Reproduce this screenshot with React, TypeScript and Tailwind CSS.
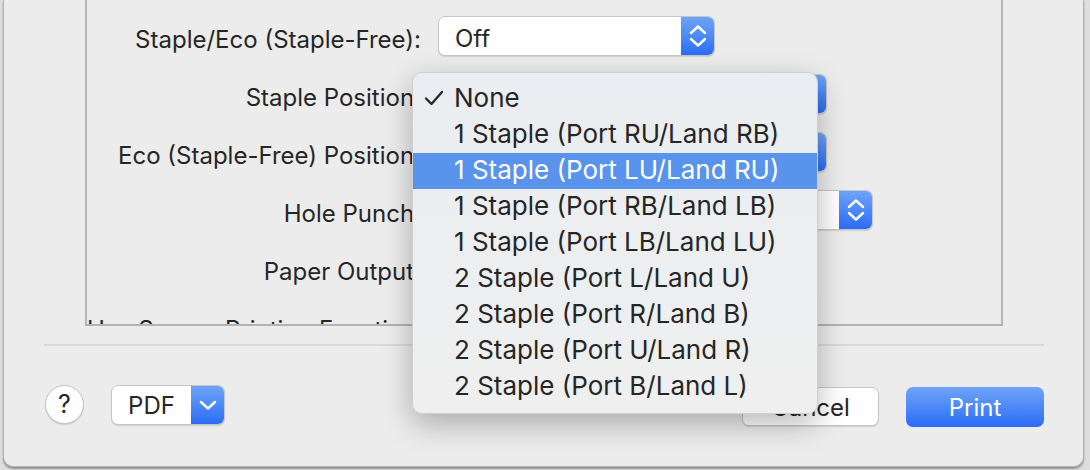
import React from "react";

const rows = [
  { label: "Staple/Eco (Staple-Free):", value: "Off", w: "w-[277px]" },
  { label: "Staple Position:", value: "None", w: "w-[389px]" },
  { label: "Eco (Staple-Free) Position:", value: "None", w: "w-[389px]" },
  { label: "Hole Punch:", value: "Off", w: "w-[435px]" },
  { label: "Paper Output:", value: "Auto", w: "w-[360px]" },
  { label: "Use Secure Printing Function:", value: "Off", w: "w-[277px]" },
];

const items = [
  "None",
  "1 Staple (Port RU/Land RB)",
  "1 Staple (Port LU/Land RU)",
  "1 Staple (Port RB/Land LB)",
  "1 Staple (Port LB/Land LU)",
  "2 Staple (Port L/Land U)",
  "2 Staple (Port R/Land B)",
  "2 Staple (Port U/Land R)",
  "2 Staple (Port B/Land L)",
];

function Stepper() {
  return (
    <svg width="18" height="24" viewBox="0 0 18 24" fill="none" stroke="white" strokeWidth="2.4" strokeLinecap="round" strokeLinejoin="round">
      <path d="M2 9 L9 2.5 L16 9" />
      <path d="M2 15 L9 21.5 L16 15" />
    </svg>
  );
}

function PopUp({ value, w }: { value: string; w: string }) {
  return (
    <div className={`${w} h-[40px] flex rounded-[7px] border border-[#c6c6c6] bg-white shadow-[0_1px_1px_rgba(0,0,0,0.12)] overflow-hidden`}>
      <div className="flex-1 flex items-center pl-[16px] pt-[6px] text-[#262626]">{value}</div>
      <div className="w-[33px] flex items-center justify-center bg-gradient-to-b from-[#6fa3f8] to-[#2a6cf5]">
        <Stepper />
      </div>
    </div>
  );
}

export default function App() {
  return (
    <div
      className="relative w-[1090px] h-[470px] bg-[#dedede] overflow-hidden text-[24px] text-[#262626]"
      style={{ fontFamily: "Inter, 'Liberation Sans', sans-serif" }}
    >
      {/* sheet window */}
      <div className="ml-[3px] w-[1081px] h-[467px] bg-[#ececec] rounded-b-[10px] border-x border-b border-[#b4b4b4] shadow-[0_2px_2px_rgba(0,0,0,0.35)] flex flex-col">
        {/* settings box */}
        <div className="ml-[81px] w-[918px] h-[326px] border-x-2 border-b-2 border-[#b3b3b3] overflow-hidden flex flex-col">
          <div className="ml-[444px] w-[311px] h-px bg-[#dcdcdc]" />
          <div className="pt-[16px] flex flex-col gap-[18px]">
            {rows.map((r) => (
              <div key={r.label} className="flex items-center h-[40px]">
                <div className="w-[334px] pt-[8px] text-right whitespace-nowrap">{r.label}</div>
                <div className="ml-[17px]">
                  <PopUp value={r.value} w={r.w} />
                </div>
              </div>
            ))}
          </div>
        </div>

        <div className="mt-[18px] ml-[40px] w-[1000px] h-[2px] bg-[#d9d9d9]" />

        {/* bottom buttons */}
        <div className="mt-[38px] flex items-center h-[41px] pl-[41px] pr-[39px]">
          <div className="w-[39px] h-[39px] rounded-full bg-white border border-[#c4c4c4] shadow-[0_1px_1px_rgba(0,0,0,0.15)] flex items-center justify-center text-[25px]">
            ?
          </div>
          <div className="ml-[27px] w-[114px] h-[40px] flex rounded-[7px] border border-[#c6c6c6] bg-white shadow-[0_1px_1px_rgba(0,0,0,0.12)] overflow-hidden">
            <div className="flex-1 flex items-center justify-center pt-[2px]">PDF</div>
            <div className="w-[33px] flex items-center justify-center bg-gradient-to-b from-[#6fa3f8] to-[#2a6cf5]">
              <svg width="18" height="10" viewBox="0 0 18 10" fill="none" stroke="white" strokeWidth="2.4" strokeLinecap="round" strokeLinejoin="round">
                <path d="M2 2 L9 8.5 L16 2" />
              </svg>
            </div>
          </div>
          <div className="ml-auto flex items-center gap-[27px] pt-[4px]">
            <div className="w-[137px] h-[39px] rounded-[7px] bg-white border border-[#c6c6c6] shadow-[0_1px_1px_rgba(0,0,0,0.12)] flex items-center justify-center pt-[2px]">
              Cancel
            </div>
            <div className="w-[138px] h-[40px] rounded-[7px] bg-gradient-to-b from-[#6fa3f8] to-[#2a6cf5] flex items-center justify-center pt-[2px] text-white">
              Print
            </div>
          </div>
        </div>
      </div>

      {/* open pop-up menu */}
      <div className="absolute left-[412px] top-[72px] w-[406px] py-[8px] rounded-[10px] bg-gradient-to-b from-[#eaedf1] to-[#efefef] border border-[#cfcfcf] shadow-[0_10px_30px_rgba(0,0,0,0.28)] overflow-hidden text-[26px]">
        {items.map((t, i) => (
          <div
            key={t}
            className={`relative h-[36px] flex items-center pl-[41px] pb-[4px] whitespace-nowrap ${i === 2 ? "bg-[#5a93eb] text-white" : ""}`}
          >
            {i === 0 && (
              <svg className="absolute left-[11px] top-[9px]" width="20" height="16" viewBox="0 0 20 16" fill="none" stroke="#2a2a2a" strokeWidth="2.4" strokeLinecap="round" strokeLinejoin="round">
                <path d="M2 8.5 L7.5 14 L18 2" />
              </svg>
            )}
            {t}
          </div>
        ))}
      </div>
    </div>
  );
}
